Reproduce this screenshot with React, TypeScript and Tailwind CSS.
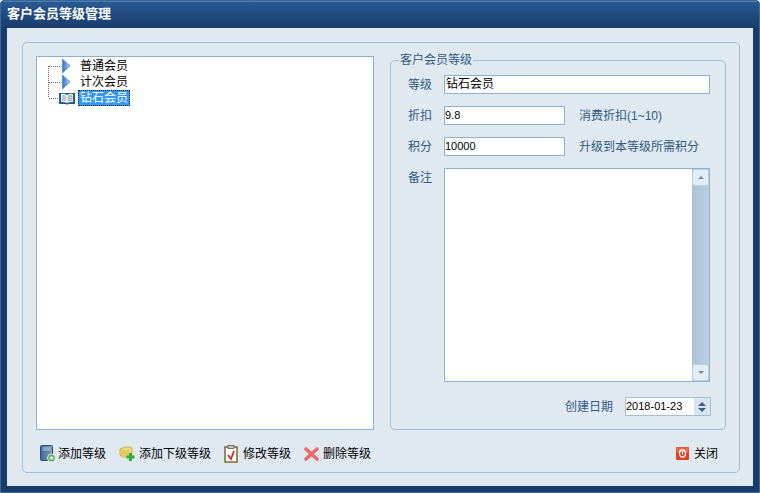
import React from "react";

function Triangle() {
  return (
    <g>
      <defs>
        <linearGradient id="tri" x1="0" x2="1" y1="0" y2="0">
          <stop offset="0" stopColor="#2f6fc4" />
          <stop offset="0.5" stopColor="#6ea3e2" />
          <stop offset="1" stopColor="#c4d9f2" />
        </linearGradient>
      </defs>
      <path d="M25.500 1 L33 8 L25.500 15 Z" fill="url(#tri)" stroke="#3f7cc8" strokeWidth="0.6" />
    </g>
  );
}

function Book() {
  return (
    <g>
      <path d="M22 3 H38 V14 H31 L30 15 L29 14 H22 Z" fill="#1f5f8e" />
      <path d="M24 4 Q27 3 30 5 V13 Q27 11.500 24 12 Z" fill="#f2f4ee" />
      <path d="M36 4 Q33 3 30 5 V13 Q33 11.500 36 12 Z" fill="#e4e6d8" />
      <path d="M25 6 H29 M25 8 H29 M25 10 H29 M31 6 H35 M31 8 H35 M31 10 H35" stroke="#8a9aa8" strokeWidth="1" />
    </g>
  );
}

function TreeRow({ label, first, last, selected }: { label: string; first?: boolean; last?: boolean; selected?: boolean }) {
  return (
    <div className="flex h-4 items-center">
      <svg width="41" height="16" viewBox="0 0 41 16" className="shrink-0">
        <path
          d={`M11.500 ${first ? 8 : 0} V${last ? 8 : 16} M12 8.500 H23`}
          stroke="#6a6a6a"
          strokeDasharray="1 1"
          fill="none"
        />
        {selected ? <Book /> : <Triangle />}
      </svg>
      <span
        className={
          selected
            ? "h-4 w-[52px] pl-px leading-[14px] text-white bg-[#2f97ff] border border-dotted border-[#3a2408]"
            : "pl-[2px] leading-4 text-black"
        }
      >
        {label}
      </span>
    </div>
  );
}

function Field({ value, className }: { value: string; className: string }) {
  return <div className={`h-[19px] bg-white border border-[#8db2cf] leading-[17px] text-black ${className}`}>{value}</div>;
}

function AddBookIcon() {
  return (
    <svg width="17" height="18" viewBox="0 0 17 18">
      <defs>
        <linearGradient id="bk" x1="0" x2="1" y1="0" y2="0">
          <stop offset="0" stopColor="#3a6a98" />
          <stop offset="1" stopColor="#7f9fc0" />
        </linearGradient>
      </defs>
      <rect x="1.500" y="0.500" width="12" height="15" rx="1" fill="url(#bk)" stroke="#2c5078" />
      <path d="M3.500 3 H11.500 M3.500 5 H11.500" stroke="#b9cde0" />
      <circle cx="12.500" cy="13" r="4" fill="#58a860" stroke="#ffffff" strokeWidth="0.8" />
      <path d="M10.500 13 H14.500 M12.500 11 V15" stroke="#fff" strokeWidth="1.300" />
    </svg>
  );
}

function FolderPlusIcon() {
  return (
    <svg width="17" height="16" viewBox="0 0 17 16">
      <path d="M1 3 L6 1 H12 L13 3 V11 H3 L1 9 Z" fill="#efd877" stroke="#c9ae5a" />
      <path d="M1 4 H10 V11 H3 Z" fill="#e4c964" />
      <path d="M11.500 7 V15 M7.500 11 H15.500" stroke="#2eae3a" strokeWidth="3" />
    </svg>
  );
}

function ClipboardIcon() {
  return (
    <svg width="15" height="18" viewBox="0 0 15 18">
      <rect x="1" y="2" width="12" height="15" fill="#fff" stroke="#7a6a30" strokeWidth="1.500" />
      <rect x="4" y="0.500" width="6" height="3" fill="#c4c8cc" stroke="#555" strokeWidth="0.800" />
      <path d="M4 10 L7 14 L10 6" stroke="#d8242a" strokeWidth="1.800" fill="none" />
    </svg>
  );
}

function CrossIcon() {
  return (
    <svg width="15" height="14" viewBox="0 0 15 14">
      <path d="M2 2 L13 12 M13 2 L2 12" stroke="#ee6a6a" strokeWidth="3.600" strokeLinecap="round" />
    </svg>
  );
}

function PowerIcon() {
  return (
    <svg width="13" height="13" viewBox="0 0 13 13">
      <rect width="13" height="13" rx="1" fill="#e2401f" />
      <rect x="0.500" y="0.500" width="12" height="5" fill="#ee6a48" />
      <ellipse cx="6.500" cy="6.500" rx="3" ry="3.500" fill="none" stroke="#fff" strokeWidth="1.300" />
      <path d="M6.500 4 V8" stroke="#fff" />
    </svg>
  );
}

function Tool({ icon, label, className }: { icon: React.ReactNode; label: string; className: string }) {
  return (
    <div className={`flex items-center text-black ${className}`}>
      {icon}
      <span>{label}</span>
    </div>
  );
}

export default function App() {
  return (
    <div
      className="w-[760px] h-[493px] flex flex-col rounded-t-[4px] border border-[#3a6898] bg-[#1a3c6c] text-[12px] overflow-hidden"
      style={{ fontFamily: '"Liberation Sans", "Noto Sans CJK SC", sans-serif' }}
    >
      <div className="h-[27px] shrink-0 pl-[6px] pb-[2px] flex items-center bg-gradient-to-b from-[#2a5a92] to-[#193c6c] text-white font-bold text-[13px] border-t border-[#4a7cb0]">
        客户会员等级管理
      </div>
      <div className="flex-1 mx-[6px] mb-[6px] bg-[#e0e8f0] pl-[15px] pr-[13px] pt-[14px] pb-[13px] flex flex-col min-h-0">
        <div className="flex-1 flex flex-col border border-[#a0c0da] rounded-[5px] px-[13px] pt-[13px]">
          <div className="flex gap-[16px] h-[374px]">
            <div className="w-[338px] bg-white border border-[#8db2cf] pt-px">
              <TreeRow label="普通会员" first />
              <TreeRow label="计次会员" />
              <TreeRow label="钻石会员" last selected />
            </div>
            <fieldset className="w-[336px] h-[377px] -mt-[3px] border border-[#a0c0da] rounded-[5px] pl-[17px] pr-[15px]">
              <legend className="-ml-[9px] px-[1px] leading-[14px] text-[#2f5b85]">客户会员等级</legend>
              <div className="flex flex-col pt-[8px] text-[#2f5b85]">
                <div className="flex items-center gap-[12px]">
                  <span className="w-[24px]">等级</span>
                  <Field value="钻石会员" className="w-[266px] pl-px" />
                </div>
                <div className="flex items-center gap-[12px] mt-[12px]">
                  <span className="w-[24px]">折扣</span>
                  <Field value="9.8" className="w-[121px] text-[11px]" />
                  <span className="ml-[2px]">消费折扣(1~10)</span>
                </div>
                <div className="flex items-center gap-[12px] mt-[12px]">
                  <span className="w-[24px]">积分</span>
                  <Field value="10000" className="w-[121px] text-[11px]" />
                  <span className="ml-[2px]">升级到本等级所需积分</span>
                </div>
                <div className="flex gap-[12px] mt-[12px]">
                  <span className="w-[24px] pt-[1px]">备注</span>
                  <div className="w-[266px] h-[214px] bg-white border border-[#8db2cf] flex justify-end">
                    <div className="w-[17px] flex flex-col justify-between bg-gradient-to-r from-[#a9c2d8] to-[#bcd0e2]">
                      <div className="h-[17px] rounded-[3px] border border-[#bcd0e0] bg-[#e4ecf3] flex items-center justify-center">
                        <div className="w-0 h-0 border-x-[3px] border-x-transparent border-b-[3px] border-b-[#6d8aa8]" />
                      </div>
                      <div className="h-[17px] rounded-[3px] border border-[#bcd0e0] bg-[#e4ecf3] flex items-center justify-center">
                        <div className="w-0 h-0 border-x-[3px] border-x-transparent border-t-[3px] border-t-[#6d8aa8]" />
                      </div>
                    </div>
                  </div>
                </div>
                <div className="flex items-center justify-end mt-[15px] -mr-[1px]">
                  <span className="mr-[12px]">创建日期</span>
                  <div className="w-[86px] h-[19px] bg-white border border-[#a0c0da] flex text-black text-[11px]">
                    <span className="flex-1 leading-[17px]">2018-01-23</span>
                    <div className="w-[16px] bg-[#d8e4ee] flex flex-col items-center justify-center gap-[2px]">
                      <div className="w-0 h-0 border-x-[4px] border-x-transparent border-b-[4px] border-b-[#35608c]" />
                      <div className="w-0 h-0 border-x-[4px] border-x-transparent border-t-[4px] border-t-[#35608c]" />
                    </div>
                  </div>
                </div>
              </div>
            </fieldset>
          </div>
          <div className="flex items-center h-[18px] mt-[14px] pl-[3px] pt-[1px]">
            <Tool icon={<AddBookIcon />} label="添加等级" className="gap-[2px]" />
            <Tool icon={<FolderPlusIcon />} label="添加下级等级" className="gap-[3px] ml-[13px]" />
            <Tool icon={<ClipboardIcon />} label="修改等级" className="gap-[4px] ml-[13px]" />
            <Tool icon={<CrossIcon />} label="删除等级" className="gap-[4px] ml-[13px]" />
            <Tool icon={<PowerIcon />} label="关闭" className="gap-[5px] ml-auto mr-[8px]" />
          </div>
        </div>
      </div>
    </div>
  );
}
